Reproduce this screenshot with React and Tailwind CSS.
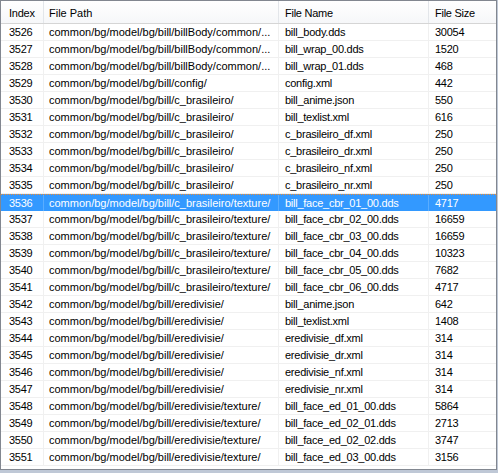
import React from 'react';

const P = 'common/bg/model/bg/bill/';

const rows = [
  [3526, P + 'billBody/common/...', 'bill_body.dds', 30054],
  [3527, P + 'billBody/common/...', 'bill_wrap_00.dds', 1520],
  [3528, P + 'billBody/common/...', 'bill_wrap_01.dds', 468],
  [3529, P + 'config/', 'config.xml', 442],
  [3530, P + 'c_brasileiro/', 'bill_anime.json', 550],
  [3531, P + 'c_brasileiro/', 'bill_texlist.xml', 616],
  [3532, P + 'c_brasileiro/', 'c_brasileiro_df.xml', 250],
  [3533, P + 'c_brasileiro/', 'c_brasileiro_dr.xml', 250],
  [3534, P + 'c_brasileiro/', 'c_brasileiro_nf.xml', 250],
  [3535, P + 'c_brasileiro/', 'c_brasileiro_nr.xml', 250],
  [3536, P + 'c_brasileiro/texture/', 'bill_face_cbr_01_00.dds', 4717],
  [3537, P + 'c_brasileiro/texture/', 'bill_face_cbr_02_00.dds', 16659],
  [3538, P + 'c_brasileiro/texture/', 'bill_face_cbr_03_00.dds', 16659],
  [3539, P + 'c_brasileiro/texture/', 'bill_face_cbr_04_00.dds', 10323],
  [3540, P + 'c_brasileiro/texture/', 'bill_face_cbr_05_00.dds', 7682],
  [3541, P + 'c_brasileiro/texture/', 'bill_face_cbr_06_00.dds', 4717],
  [3542, P + 'eredivisie/', 'bill_anime.json', 642],
  [3543, P + 'eredivisie/', 'bill_texlist.xml', 1408],
  [3544, P + 'eredivisie/', 'eredivisie_df.xml', 314],
  [3545, P + 'eredivisie/', 'eredivisie_dr.xml', 314],
  [3546, P + 'eredivisie/', 'eredivisie_nf.xml', 314],
  [3547, P + 'eredivisie/', 'eredivisie_nr.xml', 314],
  [3548, P + 'eredivisie/texture/', 'bill_face_ed_01_00.dds', 5864],
  [3549, P + 'eredivisie/texture/', 'bill_face_ed_02_01.dds', 2713],
  [3550, P + 'eredivisie/texture/', 'bill_face_ed_02_02.dds', 3747],
  [3551, P + 'eredivisie/texture/', 'bill_face_ed_03_00.dds', 3156],
];

const SELECTED = 3536;
const cols = 'grid grid-cols-[43px_235px_150px_67px]';
// per-column left padding / tracking (path column renders a little wider)
const cell = [
  'pl-[8px] tracking-[-0.25px]',
  'pl-[5px] tracking-normal',
  'pl-[6px] tracking-[-0.25px]',
  'pl-[6px] tracking-[-0.25px]',
];

export default function App() {
  return (
    <div
      className="w-[498px] h-[473px] bg-[#bfc8d6] text-[11px] text-black"
      style={{ fontFamily: '"Liberation Sans", Arial, sans-serif' }}
    >
      <div className="w-[497px] h-[470px] bg-white border border-[#828790] overflow-hidden">
        {/* Column headers */}
        <div className={`${cols} h-[23px] bg-gradient-to-b from-white to-[#f6f7f9] border-b border-[#d5d5d5]`}>
          {['Index', 'File Path', 'File Name', 'File Size'].map((h, i) => (
            <div
              key={h}
              className={`flex items-center pt-[2px] ${cell[i]} ${i < 3 ? 'border-r border-[#e3e6ea]' : ''}`}
            >
              {h}
            </div>
          ))}
        </div>

        {/* Rows */}
        {rows.map(([idx, path, name, size]) => {
          const sel = idx === SELECTED;
          return (
            <div
              key={idx}
              className={`${cols} h-[17px] ${
                sel
                  ? 'bg-[#3399ff] text-white border-t border-dotted border-[#f08c30]'
                  : 'border-b border-[#f0f0f0]'
              }`}
            >
              {[idx, path, name, size].map((v, i) => (
                <div
                  key={i}
                  className={`flex items-center pt-[1px] whitespace-nowrap overflow-hidden leading-none ${cell[i]} ${
                    i < 3 ? (sel ? 'border-r border-[#5aadff]' : 'border-r border-[#f0f0f0]') : ''
                  }`}
                >
                  {v}
                </div>
              ))}
            </div>
          );
        })}
      </div>
    </div>
  );
}
